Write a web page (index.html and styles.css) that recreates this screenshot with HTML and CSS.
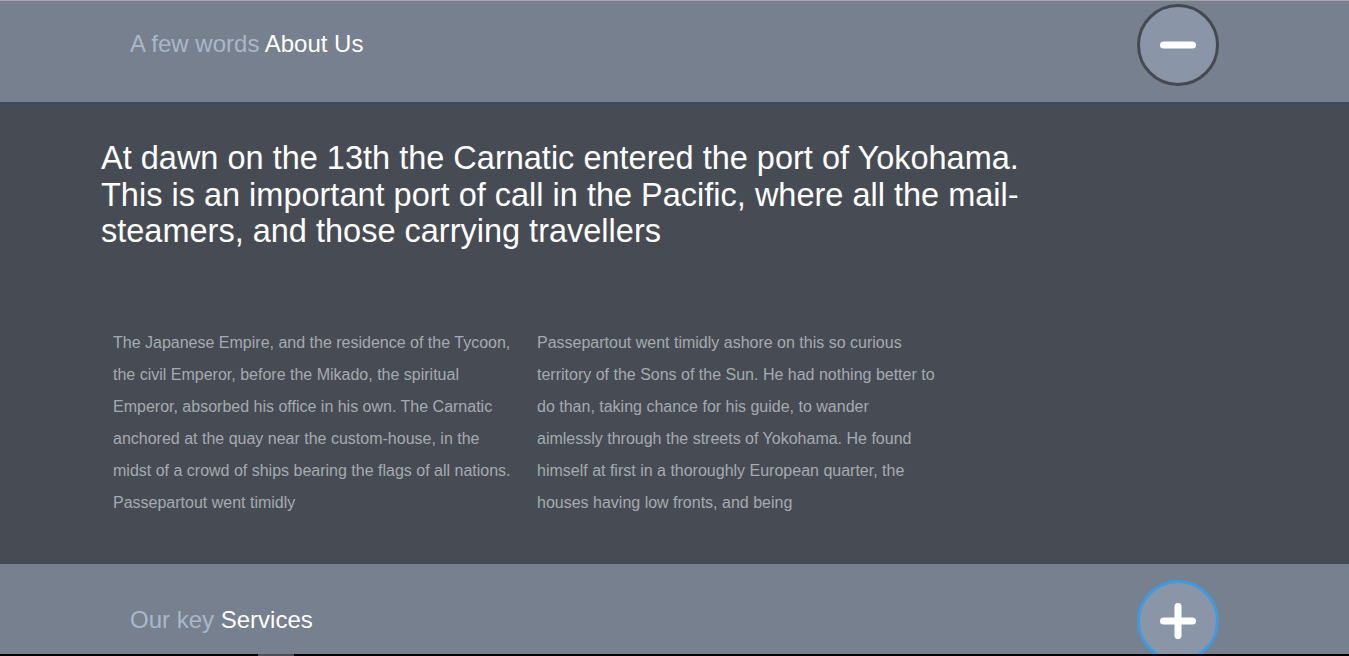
FILE: index.html
```html
<!DOCTYPE html>
<html lang="en">
<head>
<meta charset="utf-8">
<title>Accordion</title>
<link rel="stylesheet" href="styles.css">
</head>
<body>
<div class="topline"></div>
<section class="item item-open">
  <div class="item-head head-first">
    <h2 class="item-title"><span class="dim">A few words</span> About Us</h2>
    <button class="toggle toggle-open" aria-label="Collapse">
      <svg width="36" height="36" viewBox="0 0 36 36"><line x1="3.5" y1="18" x2="32.5" y2="18" stroke="#fff" stroke-width="7" stroke-linecap="round"/></svg>
    </button>
  </div>
  <div class="item-body">
    <h3 class="lead">At dawn on the 13th the Carnatic entered the port of Yokohama. This is an important port of call in the Pacific, where all the mail-steamers, and those carrying travellers</h3>
    <div class="cols">
      <p class="col">The Japanese Empire, and the residence of the Tycoon, the civil Emperor, before the Mikado, the spiritual Emperor, absorbed his office in his own. The Carnatic anchored at the quay near the custom-house, in the midst of a crowd of ships bearing the flags of all nations. Passepartout went timidly</p>
      <p class="col">Passepartout went timidly ashore on this so curious territory of the Sons of the Sun. He had nothing better to do than, taking chance for his guide, to wander aimlessly through the streets of Yokohama. He found himself at first in a thoroughly European quarter, the houses having low fronts, and being</p>
    </div>
  </div>
</section>
<section class="item">
  <div class="item-head head-second">
    <h2 class="item-title"><span class="dim">Our key</span> Services</h2>
    <button class="toggle toggle-closed" aria-label="Expand">
      <svg width="36" height="36" viewBox="0 0 36 36"><line x1="3.5" y1="18" x2="32.5" y2="18" stroke="#fff" stroke-width="7" stroke-linecap="round"/><line x1="18" y1="3.5" x2="18" y2="32.5" stroke="#fff" stroke-width="7" stroke-linecap="round"/></svg>
    </button>
  </div>
</section>
<div class="scrollbar"><div class="thumb"></div></div>
</body>
</html>
```
FILE: styles.css
```css
html, body {
  margin: 0;
  padding: 0;
  height: 656px;
  overflow: hidden;
  background: #76808e;
  font-family: "Liberation Sans", Arial, sans-serif;
}
.topline {
  height: 1px;
  background: #a2a4a6;
}
.item-head {
  display: flex;
  align-items: flex-start;
  justify-content: space-between;
  background: #76808e;
  padding-left: 130px;
  padding-right: 130px;
  box-sizing: border-box;
}
.head-first {
  height: 104px;
  padding-top: 3px;
  border-bottom: 3px solid #3a4d60;
}
.head-second {
  height: 120px;
  padding-top: 16px;
}
.item-title {
  margin: 0;
  font-weight: normal;
  font-size: 24px;
  line-height: 28px;
  color: #ffffff;
}
.head-first .item-title { padding-top: 26px; }
.head-second .item-title { padding-top: 26px; }
.dim { color: #a9b7c9; }
.toggle {
  width: 82px;
  height: 82px;
  border-radius: 50%;
  background: #8a95a8;
  border: 3px solid #454a52;
  box-sizing: border-box;
  padding: 0;
  display: flex;
  align-items: center;
  justify-content: center;
}
.toggle-closed { border-color: #3d9be0; }
.item-body {
  background: #474c54;
  padding: 35px 130px 42px 101px;
  height: 459px;
  box-sizing: border-box;
}
.lead {
  margin: 0;
  width: 940px;
  font-weight: normal;
  font-size: 32.5px;
  line-height: 36.5px;
  color: #ffffff;
}
.cols {
  display: flex;
  gap: 24px;
  padding-left: 12px;
  margin-top: 77px;
}
.col {
  margin: 0;
  width: 400px;
  font-size: 16px;
  line-height: 32px;
  color: #a5aab1;
}
.scrollbar {
  position: fixed;
  left: 0;
  right: 0;
  bottom: 0;
  height: 2px;
  background: #000;
}
.thumb {
  margin-left: 258px;
  width: 36px;
  height: 2px;
  background: #4a4f55;
}
```
